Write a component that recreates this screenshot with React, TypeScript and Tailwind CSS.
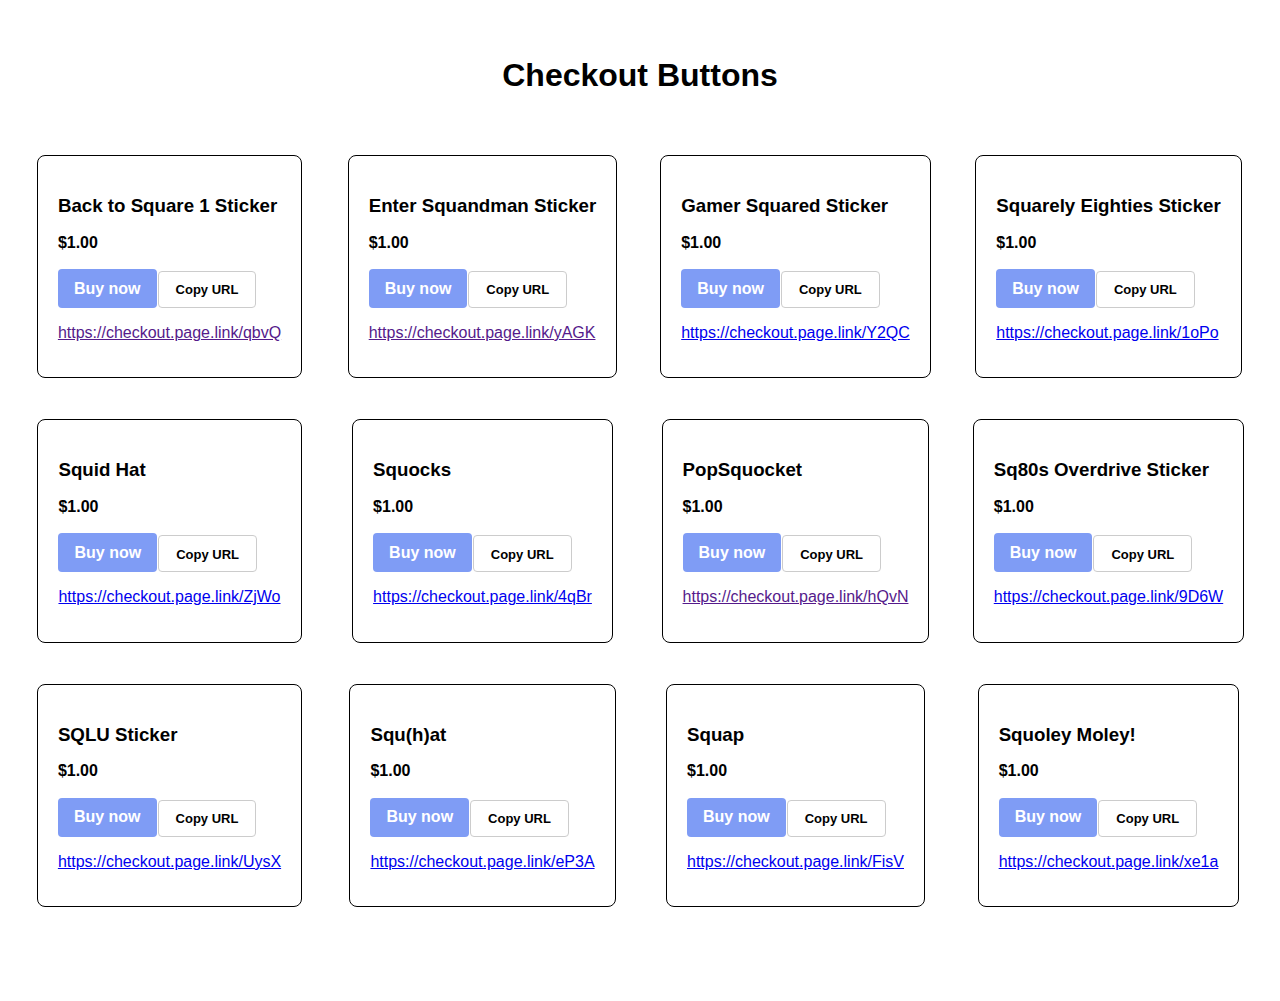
const products = [
  { name: "Back to Square 1 Sticker", code: "qbvQ", visited: true },
  { name: "Enter Squandman Sticker", code: "yAGK", visited: true },
  { name: "Gamer Squared Sticker", code: "Y2QC", visited: false },
  { name: "Squarely Eighties Sticker", code: "1oPo", visited: false },
  { name: "Squid Hat", code: "ZjWo", visited: false },
  { name: "Squocks", code: "4qBr", visited: false },
  { name: "PopSquocket", code: "hQvN", visited: true },
  { name: "Sq80s Overdrive Sticker", code: "9D6W", visited: false },
  { name: "SQLU Sticker", code: "UysX", visited: false },
  { name: "Squ(h)at", code: "eP3A", visited: false },
  { name: "Squap", code: "FisV", visited: false },
  { name: "Squoley Moley!", code: "xe1a", visited: false },
];

function ProductCard({ product }: { product: (typeof products)[0] }) {
  const url = `https://checkout.page.link/${product.code}`;

  return (
    <div className="w-fit rounded-lg border border-black bg-white p-5">
      {/* Name */}
      <h3 className="mt-[19px] text-[18.72px] font-bold leading-[21.5px] text-black">{product.name}</h3>

      {/* Price */}
      <h4 className="mt-[17px] text-base font-bold leading-[18.4px] text-black">$1.00</h4>

      {/* Actions */}
      <div className="mt-[17px] flex items-end gap-px">
        <button className="flex h-[39px] items-center rounded bg-[#7f9cf5] px-4 pt-px text-base font-bold leading-[18.4px] text-white">
          Buy now
        </button>
        <button className="flex h-[37px] items-center rounded border border-[#cccccc] bg-white px-[17px] pt-px text-[13px] font-bold leading-[15px] text-black">
          Copy URL
        </button>
      </div>

      {/* Link */}
      <a
        href={url}
        className={
          product.visited
            ? "mt-4 mb-[15px] block text-base leading-[18.4px] text-[#551a8b] underline"
            : "mt-4 mb-[15px] block text-base leading-[18.4px] text-[#0000ee] underline"
        }
      >
        {url}
      </a>
    </div>
  );
}

export default function App() {
  return (
    <div className="min-h-screen bg-white pt-[57px] pb-20 font-['Liberation_Sans',Arial,sans-serif]">
      <h1 className="text-center text-[32px] font-bold leading-[37px] text-black">Checkout Buttons</h1>

      <div className="ml-[13px] mt-[61px] grid w-[1252px] grid-cols-4 justify-items-center gap-y-[41px]">
        {products.map((p) => (
          <ProductCard key={p.code} product={p} />
        ))}
      </div>
    </div>
  );
}
